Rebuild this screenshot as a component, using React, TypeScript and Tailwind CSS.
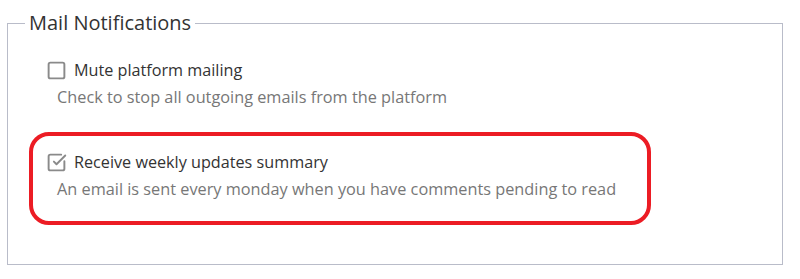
import { Square, SquareCheckBig } from "lucide-react";

type Option = {
  label: string;
  hint: string;
  checked: boolean;
  highlighted?: boolean;
};

const options: Option[] = [
  {
    label: "Mute platform mailing",
    hint: "Check to stop all outgoing emails from the platform",
    checked: false,
  },
  {
    label: "Receive weekly updates summary",
    hint: "An email is sent every monday when you have comments pending to read",
    checked: true,
    highlighted: true,
  },
];

function OptionRow({ option }: { option: Option }) {
  const Icon = option.checked ? SquareCheckBig : Square;
  return (
    <div
      className={
        option.highlighted
          ? "w-[622px] rounded-[20px] border-4 border-[#ec1c24] pt-[14px] pb-[21px] pl-[13px]"
          : "w-[622px] border-4 border-transparent pt-[14px] pb-[20px] pl-[13px]"
      }
    >
      <label className="flex items-center gap-[7px] text-[16.2px] leading-[24px] text-[#333]">
        <Icon size={21} strokeWidth={2.2} className="text-[#8a8a8a]" />
        {option.label}
      </label>
      <p className="mt-[4px] pl-[11px] text-[16.3px] leading-[22px] text-[#777]">
        {option.hint}
      </p>
    </div>
  );
}

export default function App() {
  return (
    <div className="h-[279px] w-[800px] bg-white pt-[9px] pl-[7px] font-['Open_Sans',sans-serif]">
      <fieldset className="h-[256px] w-[776px] border border-[#b9bcc9] px-[21px]">
        <legend className="-ml-1 px-1 text-[20px] leading-[28px] text-[#333]">
          Mail Notifications
        </legend>
        <div className="flex flex-col pt-[3px]">
          {options.map((option) => (
            <OptionRow key={option.label} option={option} />
          ))}
        </div>
      </fieldset>
    </div>
  );
}
